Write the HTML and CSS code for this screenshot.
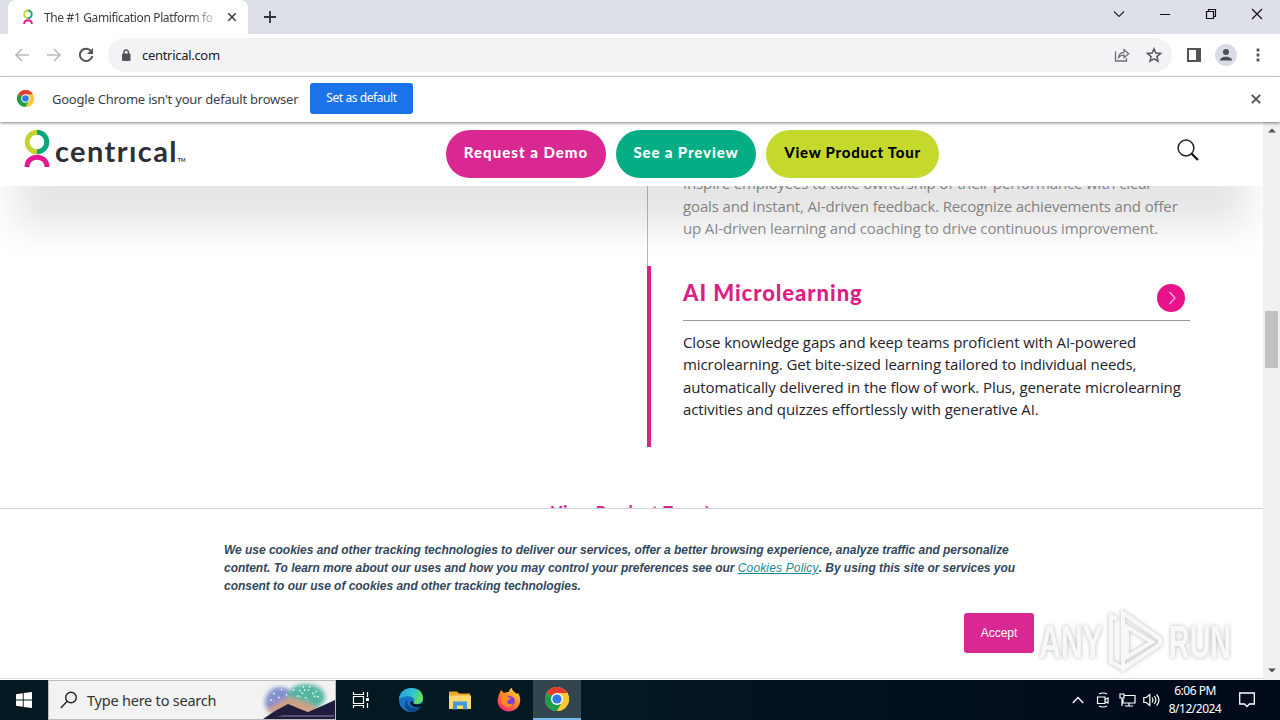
FILE: index.html
```html
<!DOCTYPE html>
<html lang="en">
<head>
<meta charset="utf-8">
<title>The #1 Gamification Platform</title>
<link rel="stylesheet" href="styles.css">
</head>
<body>
<svg width="0" height="0" class="defs">
  <defs>
    <symbol id="brand" viewBox="0 0 26 40">
      <path d="M13 3.2a9.8 9.8 0 0 0 0 19.6" fill="none" stroke="#c2d42e" stroke-width="5"/>
      <path d="M13 3.2a9.8 9.8 0 0 1 0 19.6" fill="none" stroke="#0aa77f" stroke-width="5"/>
      <path d="M3 38c0-13 20-13 20 0" fill="none" stroke="#e5198d" stroke-width="5"/>
    </symbol>
    <symbol id="chrome" viewBox="0 0 24 24">
      <circle cx="12" cy="12" r="12" fill="#fcc934"/>
      <path d="M12 12 1.6 6A12 12 0 0 1 22.4 6z" fill="#e33b2e"/>
      <path d="M1.6 6A12 12 0 0 0 12 24l5.200-9L12 12z" fill="#1e9e4a"/>
      <path d="M12 6h10.400A12 12 0 0 1 12 24l5.200-9z" fill="#fcc934"/>
      <circle cx="12" cy="12" r="6" fill="#fff"/>
      <circle cx="12" cy="12" r="4.600" fill="#3079ea"/>
    </symbol>
  </defs>
</svg>

<div class="tabstrip">
  <div class="tab">
    <svg class="favicon" width="10" height="16"><use href="#brand"/></svg>
    <span class="tab-title">The #1 Gamification Platform fo</span>
    <svg width="10" height="10" viewBox="0 0 10 10"><path d="M1.300 1.300l7.400 7.400M8.700 1.300 1.300 8.700" stroke="#3c4043" stroke-width="1.600"/></svg>
  </div>
  <svg class="newtab" width="12" height="12" viewBox="0 0 12 12"><path d="M6 0v12M0 6h12" stroke="#303338" stroke-width="1.800"/></svg>
  <div class="wincontrols">
    <svg width="12" height="12" viewBox="0 0 12 12"><path d="M1 3.500l5 5 5-5" fill="none" stroke="#222" stroke-width="1.100"/></svg>
    <svg width="12" height="12" viewBox="0 0 12 12"><path d="M1 6.500h10" stroke="#111"/></svg>
    <svg width="12" height="12" viewBox="0 0 12 12"><path d="M1.500 3.500h7v7h-7zM3.500 3.500v-2h7v7h-2" fill="none" stroke="#111" stroke-width="1.200"/></svg>
    <svg width="12" height="12" viewBox="0 0 12 12"><path d="M1 1l10 10M11 1 1 11" stroke="#111" stroke-width="1.200"/></svg>
  </div>
</div>

<div class="toolbar">
  <svg width="16" height="16" viewBox="0 0 16 16"><path d="M15 8H2M8 2 2 8l6 6" fill="none" stroke="#babcbe" stroke-width="1.700"/></svg>
  <svg width="16" height="16" viewBox="0 0 16 16"><path d="M1 8h13M8 2l6 6-6 6" fill="none" stroke="#babcbe" stroke-width="1.700"/></svg>
  <svg width="16" height="16" viewBox="0 0 16 16"><path d="M13.300 4.500A6.200 6.200 0 1 0 14.200 9" fill="none" stroke="#505357" stroke-width="2"/><path d="M15 1v6H9z" fill="#505357"/></svg>
  <div class="omnibox">
    <svg width="10" height="13" viewBox="0 0 10 13"><rect x="1" y="4.500" width="8.500" height="7.500" rx="1" fill="#505357"/><path d="M2.900 5V3.300a2.300 2.300 0 0 1 4.600 0V5" fill="none" stroke="#505357" stroke-width="1.400"/></svg>
    <span class="url">centrical.com</span>
    <svg class="share" width="16" height="16" viewBox="0 0 16 16"><path d="M1.500 4.500v9.500h11v-3" fill="none" stroke="#6a6d71" stroke-width="1.300"/><path d="M4.500 10.500C5 7 7 5.500 10 5.300V2.500l4.700 4.300-4.700 4V8.100C7.500 8 6 8.700 4.500 10.500z" fill="none" stroke="#6a6d71" stroke-width="1.200"/></svg>
    <svg width="16" height="16" viewBox="0 0 16 16"><path d="M8 1.800l1.800 4.300 4.700.4-3.600 3.100 1.100 4.600L8 11.800l-4 2.400 1.100-4.600L1.500 6.500l4.700-.4z" fill="none" stroke="#55585c" stroke-width="1.500"/></svg>
  </div>
  <svg class="panel" width="14" height="14" viewBox="0 0 14 14"><path d="M1 1h12v12H1z" fill="#fff" stroke="#505357" stroke-width="2"/><path d="M9 1h4v12H9z" fill="#505357"/></svg>
  <svg class="avatar" width="22" height="22" viewBox="0 0 22 22"><circle cx="11" cy="11" r="11" fill="#dadce5"/><circle cx="11" cy="8" r="3" fill="#4a4f5c"/><path d="M5 16.500c0-5 12-5 12 0z" fill="#4a4f5c"/></svg>
  <svg class="kebab" width="4" height="14" viewBox="0 0 4 14"><path d="M.6.600h2.800v2.800H.6zM.6 5.600h2.800v2.800H.6zM.6 10.600h2.800v2.800H.6z" fill="#55585c"/></svg>
</div>

<div class="infobar">
  <svg width="17" height="17"><use href="#chrome"/></svg>
  <span class="info-text">Google Chrome isn't your default browser</span>
  <span class="info-btn">Set as default</span>
  <svg class="info-close" width="10" height="10" viewBox="0 0 10 10"><path d="M.8.800l8.400 8.400M9.200.8.800 9.200" stroke="#505357" stroke-width="1.900"/></svg>
</div>

<div class="viewport">
  <div class="page">
    <header class="header">
      <div class="logo">
        <svg width="26" height="40"><use href="#brand"/></svg>
        <span class="logo-name">centrıcal<span class="tm">TM</span></span>
      </div>
      <nav class="cta">
        <a class="pill pink">Request a Demo</a>
        <a class="pill green">See a Preview</a>
        <a class="pill lime">View Product Tour</a>
      </nav>
      <svg class="search" width="24" height="24" viewBox="0 0 24 24"><circle cx="10" cy="10" r="7.900" fill="none" stroke="#222" stroke-width="1.500"/><path d="M15.500 15.500 22 22" stroke="#111" stroke-width="2.200"/></svg>
    </header>
    <main class="main">
      <section class="item">
        <p class="copy muted">Inspire employees to take ownership of their performance with clear<br>goals and instant, AI-driven feedback. Recognize achievements and offer<br>up AI-driven learning and coaching to drive continuous improvement.</p>
      </section>
      <section class="item active">
        <div class="item-head">
          <h2>AI Microlearning</h2>
          <svg width="28" height="28" viewBox="0 0 28 28"><circle cx="14" cy="14" r="14" fill="#e8138b"/><path d="M12.500 8l5.500 6-5.500 6" fill="none" stroke="#fbd" stroke-width="1.200"/></svg>
        </div>
        <p class="copy">Close knowledge gaps and keep teams proficient with AI-powered<br>microlearning. Get bite-sized learning tailored to individual needs,<br>automatically delivered in the flow of work. Plus, generate microlearning<br>activities and quizzes effortlessly with generative AI.</p>
      </section>
      <a class="tour">View Product Tour <svg width="8" height="14" viewBox="0 0 8 14"><path d="M1 1l5 6-5 6" fill="none" stroke="#e0218a" stroke-width="1.500"/></svg></a>
    </main>
    <aside class="cookies">
      <p>We use cookies and other tracking technologies to deliver our services, offer a better browsing experience, analyze traffic and personalize<br>content. To learn more about our uses and how you may control your preferences see our <a>Cookies Policy</a>. By using this site or services you<br>consent to our use of cookies and other tracking technologies.</p>
      <span class="accept">Accept</span>
      <svg class="watermark" width="204" height="66" viewBox="0 0 204 66">
        <g class="wm-text"><text x="5" y="49" textLength="64" lengthAdjust="spacingAndGlyphs">ANY</text><text x="135" y="49" textLength="62" lengthAdjust="spacingAndGlyphs">RUN</text></g>
        <g class="wm-mark"><path d="M83 10l-6-3v46l12 6 6-4M89 4l37 26v5L89 60z"/><path d="M93 18v30l25-15z"/></g>
      </svg>
    </aside>
  </div>
  <div class="scrollbar">
    <svg width="8" height="5" viewBox="0 0 8 5"><path d="M0 4.500 4 .5l4 4z" fill="#505050"/></svg>
    <div class="thumb"></div>
    <svg class="down" width="8" height="5" viewBox="0 0 8 5"><path d="M0 .5l4 4 4-4z" fill="#505050"/></svg>
  </div>
</div>

<div class="taskbar">
  <div class="start"><svg width="16" height="16" viewBox="0 0 16 16"><path d="M0 2.200 6.800 1.200v6.300H0zM7.700 1.100 16 0v7.500H7.700zM0 8.500h6.800v6.300L0 13.800zM7.700 8.500H16V16l-8.300-1.100z" fill="#fff"/></svg></div>
  <div class="searchbox">
    <svg width="18" height="18" viewBox="0 0 18 18"><circle cx="11" cy="6.500" r="5.300" fill="none" stroke="#222" stroke-width="1.400"/><path d="M7.200 10.300.8 17" stroke="#222" stroke-width="1.400"/></svg>
    <span>Type here to search</span>
    <svg class="art" width="74" height="38" viewBox="0 0 74 38">
      <defs><filter id="soft" x="-20%" y="-20%" width="140%" height="140%"><feGaussianBlur stdDeviation="2"/></filter></defs>
      <g filter="url(#soft)"><ellipse cx="19" cy="21" rx="15" ry="15" fill="#8590ce"/><ellipse cx="45" cy="16" rx="19" ry="13" fill="#57b5a0"/><path d="M6 28l22-12 24 8 8 8H8z" fill="#d0a084"/></g>
      <path d="M28 5l2 4M20 8l2 3M12 12l3 2M33 8l-1 3M9 19l4 1M17 16l3 2M25 13l2 3M42 5l2 5M49 5l-2 5M38 9l4 4M56 10l-5 3M58 16l-7-1M44 16l3 3M36 15l4 1" stroke="#d8f4f8" stroke-width="1.300" stroke-dasharray="2 1.500"/>
      <path d="M2 38l12-8 13-7 12 5 8 3 14-6 13-6v19z" fill="#211b3d"/>
      <path d="M22 34h51v2H16z" fill="#555274"/>
    </svg>
  </div>
  <div class="app"><svg width="18" height="18" viewBox="0 0 18 18"><path d="M1.500 1v2.500h10V1M1.500 17v-2.500h10V17M1.500 5.500h10v7h-10zM15.500 1v5M15.500 12v5" fill="none" stroke="#fff" stroke-width="1.200"/><path d="M14 7h3v3h-3z" fill="#fff"/></svg></div>
  <div class="app edge"><svg width="24" height="24" viewBox="0 0 24 24">
    <defs><linearGradient id="eg" x2="1" y2=".3"><stop stop-color="#1f9be0"/><stop offset=".6" stop-color="#30c4cf"/><stop offset="1" stop-color="#62dd64"/></linearGradient></defs>
    <circle cx="12" cy="12" r="12" fill="#1672c4"/>
    <path d="M0 11C1-3.500 24-3.500 24 10c0 5-4 6.500-8 6-2-.3-2-1.500-1-2.500C17 10 9 5 0 11z" fill="url(#eg)"/>
    <path d="M9 11c-2.500 5 2 12 12 8-2.500 4-6 5-9 5-7-2-8-10-3-13z" fill="#12468f"/>
    <path d="M14.500 13.500c-1.500 2 2 4 8 2L24 14l-1 4.500c-5 2.500-13 0-11.500-5z" fill="#031a22"/></svg></div>
  <div class="app"><svg width="22" height="19" viewBox="0 0 22 19"><path d="M0 .5h8l2 2h11V8H0z" fill="#e9a92c"/><path d="M0 4.500h22V18H0z" fill="#fbd770"/><path d="M4 18.500v-8h14v8h-4v-4H8v4z" fill="#3f9bd6"/></svg></div>
  <div class="app"><svg width="24" height="24" viewBox="0 0 24 24">
    <defs><linearGradient id="ff" x1=".9" x2=".2" y2="1"><stop stop-color="#ffe146"/><stop offset=".45" stop-color="#ff8b25"/><stop offset="1" stop-color="#f5227c"/></linearGradient></defs>
    <path d="M3 4l1-2 3 3c2-1 4-1 5-1 0-2 1-3.500 3-4 0 3 3 4 5 6l1-1c2 3 2.500 6 2 9-1 6-6 9.500-11.500 9.500C5 23.500 0 18 .7 12 1 9 2 7 3 4z" fill="url(#ff)"/>
    <circle cx="12.500" cy="13" r="5.300" fill="#7542d8"/><path d="M5 7c3-1 5 0 6 2l3 1c-1 2-4 2-4 4 0 2 4 3 6 1-1 6-11 5-12-2z" fill="#ff8b20"/></svg></div>
  <div class="app current"><svg width="24" height="24"><use href="#chrome"/></svg></div>
  <div class="tray">
    <svg width="12" height="8" viewBox="0 0 12 8"><path d="M.8 7 6 1.500 11.200 7" fill="none" stroke="#fff" stroke-width="1.300"/></svg>
    <svg class="meet" width="14" height="16" viewBox="0 0 14 16"><path d="M3 2c3-1.500 5-1.500 8 0M3 14c3 1.500 5 1.500 8 0M1.500 5h7.500v6.500H1.500zM9 7.500l3-1.500v5L9 9.500" fill="none" stroke="#fff" stroke-width="1.200"/></svg>
    <svg class="net" width="17" height="14" viewBox="0 0 17 14"><path d="M5 2.500h11v7.500H4V6M10 10v3M6 13h8M1 1h4v4H1zM3 5v8" fill="none" stroke="#fff" stroke-width="1.200"/></svg>
    <svg class="vol" width="17" height="14" viewBox="0 0 17 14"><path d="M.8 4.500h2.500l3.500-3v11l-3.500-3H.8zM9 4.500c1.200 1.500 1.200 3.500 0 5M11.300 3c2 2.500 2 5.500 0 8M13.600 1.500c3 3.500 3 7.500 0 11" fill="none" stroke="#fff" stroke-width="1.200"/></svg>
    <div class="clock"><span>6:06 PM</span><span>8/12/2024</span></div>
    <svg class="note" width="16" height="16" viewBox="0 0 16 16"><path d="M.7 1h14.600v11H10.500L8 14.500 5.500 12H.7z" fill="none" stroke="#fff" stroke-width="1.300"/></svg>
  </div>
</div>
</body>
</html>
```

FILE: styles.css
```css
* { box-sizing: border-box; }
body { margin: 0; width: 1280px; height: 720px; overflow: hidden; display: flex; flex-direction: column; background: #fff; font-family: "Noto Sans", "Open Sans", sans-serif; }
svg { display: block; flex: none; }
span, a { white-space: nowrap; }
.defs { position: absolute; }

.tabstrip { flex: none; height: 34px; background: #dde0e8; display: flex; align-items: center; padding-left: 8px; }
.tab { width: 240px; height: 34px; background: #fff; border-radius: 8px 8px 0 0; display: flex; align-items: center; padding-left: 15px; }
.tab-title { width: 170px; margin: 0 13px 0 11px; overflow: hidden; font-size: 12px; letter-spacing: -.36px; color: #3c4043; -webkit-mask-image: linear-gradient(90deg, #000 145px, transparent 178px); }
.newtab { margin-left: 16px; }
.wincontrols { margin-left: auto; display: flex; gap: 34px; padding: 0 17px 6px 0; }

.toolbar { flex: none; height: 43px; border-bottom: 1px solid #d5d7db; display: flex; align-items: center; padding: 0 20px 0 14px; gap: 16px; }
.omnibox { width: 1064px; height: 34px; margin-left: -2px; border-radius: 17px; background: #f1f3f4; display: flex; align-items: center; padding: 0 10px 0 13px; }
.url { margin-left: 11px; font-size: 13px; color: #202124; letter-spacing: -.3px; }
.share { margin: 0 16px 0 auto; }
.panel { margin-left: -1px; }
.avatar { margin-left: -2px; }
.kebab { margin-left: 3px; }

.infobar { flex: none; height: 45px; display: flex; align-items: center; padding: 0 19px 2px 17px; position: relative; z-index: 3; background: #fff; box-shadow: 0 1px 3px rgba(0,0,0,.5); }
.info-text { width: 246px; margin: 0 12px 0 18px; font-size: 13px; letter-spacing: -.23px; color: #3c4043; }
.info-btn { width: 103px; height: 31px; line-height: 30px; text-align: center; border-radius: 3px; background: #1a73e8; color: #fff; font-size: 12px; letter-spacing: -.42px; }
.info-close { margin-left: auto; }

.viewport { flex: none; height: 558px; display: flex; }
.page { width: 1263px; display: flex; flex-direction: column; overflow: hidden; }
.header { flex: none; height: 64px; position: relative; z-index: 2; display: flex; align-items: flex-start; padding: 7px 0 0 24px; }
/* taller than the bar, so the shadow keeps its full strength below it */
.header::before { content: ""; position: absolute; z-index: -1; inset: -100px 0 0; background: #fff; box-shadow: 0 56px 36px -14px rgba(0,0,0,.1); }
.logo { width: 422px; display: flex; }
.logo-name { margin: 3px 0 0 5px; font: 700 29px/38px Lato, sans-serif; letter-spacing: 1.4px; color: #2d3038; }
.tm { font-size: 5px; letter-spacing: 0; }
.cta { display: flex; gap: 10px; padding-top: 1px; }
.pill { height: 48px; border-radius: 24px; text-align: center; font: 900 15px/45px Lato, sans-serif; color: #fff; }
.pink { width: 160px; background: #d92891; letter-spacing: 1.02px; }
.green { width: 140px; background: #05ad84; letter-spacing: .88px; }
.lime { width: 173px; background: #c5d92d; color: #000; letter-spacing: .72px; }
.search { margin: 9px 0 0 237px; }

.main { height: 322px; flex: none; padding-left: 647px; overflow: hidden; }
.item { height: 80px; border-left: 1px solid #bbb; padding-left: 35px; overflow: hidden; }
.active { height: 181px; border-left: 4px solid #d92387; padding-left: 32px; }
.copy { margin: 10px 0 0; font: 15px/22.4px "Open Sans", sans-serif; letter-spacing: -.09px; color: #22232b; white-space: nowrap; }
.muted { margin-top: -13.8px; letter-spacing: -.14px; color: #8f8f8f; }
.item-head { width: 507px; height: 55px; border-bottom: 1px solid #999; display: flex; justify-content: space-between; padding: 18px 5px 0 0; }
h2 { margin: -5px 0 0; font: 900 22px/28px Lato, sans-serif; letter-spacing: .95px; color: #dc1f86; }
.tour { display: flex; gap: 6px; align-items: center; margin: 54px 0 0 -96px; font: 900 16px/22px Lato, sans-serif; letter-spacing: .9px; color: #dc2588; }

.cookies { flex: none; height: 171px; border-top: 1px solid #cbd6e2; border-bottom: 1px solid #d5dde6; padding: 32px 30px 0 224px; display: grid; grid-template-columns: 740px 70px 204px; grid-template-rows: 54px 1fr; background: #fff; }
.cookies p { grid-column: 1 / 4; height: 54px; margin: 0; white-space: nowrap; font: italic 700 12px/18px "Liberation Sans", sans-serif; letter-spacing: -.03px; color: #33475b; }
.cookies p a { font-weight: 400; letter-spacing: .16px; color: #178a99; text-decoration: underline; }
.accept { grid-column: 2; height: 40px; margin-top: 18px; border-radius: 3px; background: #d92891; color: #fff; text-align: center; font: 12px/40px "Liberation Sans", sans-serif; }
.watermark { margin-top: 14px; filter: drop-shadow(0 0 2px rgba(0,0,0,.28)); }
.wm-text { font: 700 46px "Liberation Sans", sans-serif; fill: #f8f8f8; }
.wm-mark { fill: none; stroke: #f8f8f8; stroke-width: 4; }

.scrollbar { width: 17px; background: #f1f1f1; display: flex; flex-direction: column; align-items: center; padding: 6px 0 7px 0; }
.thumb { width: 13px; height: 57px; margin-top: 178px; background: #c1c1c1; }
.down { margin-top: auto; }

.taskbar { flex: none; height: 40px; background: linear-gradient(90deg, #031921, #031921 45%, #020b1c 90%); display: flex; }
.start { width: 48px; display: flex; align-items: center; justify-content: center; }
.searchbox { width: 288px; border: 1px solid #bbb; background: #f2f2f2; display: flex; align-items: center; padding-left: 11px; }
.searchbox span { width: 129px; margin-left: 9px; font-size: 14.500px; letter-spacing: -.22px; color: #333; }
.art { margin-left: auto; }
.app { width: 49px; display: flex; align-items: center; justify-content: center; }
.edge { margin-left: 1px; }
.current { width: 48px; background: #334650; border-bottom: 2px solid #76b9ed; }
.tray { margin-left: auto; display: flex; align-items: center; padding-right: 25px; color: #fff; }
.tray > svg:first-child { margin-right: 1px; }
.meet { margin-left: 11px; }
.net { margin-left: 9px; }
.vol { margin-left: 7px; }
.clock { width: 60px; margin-left: 5px; display: flex; flex-direction: column; align-items: center; font-size: 12px; line-height: 18px; letter-spacing: -.5px; }
.note { margin-left: 14px; }
```
